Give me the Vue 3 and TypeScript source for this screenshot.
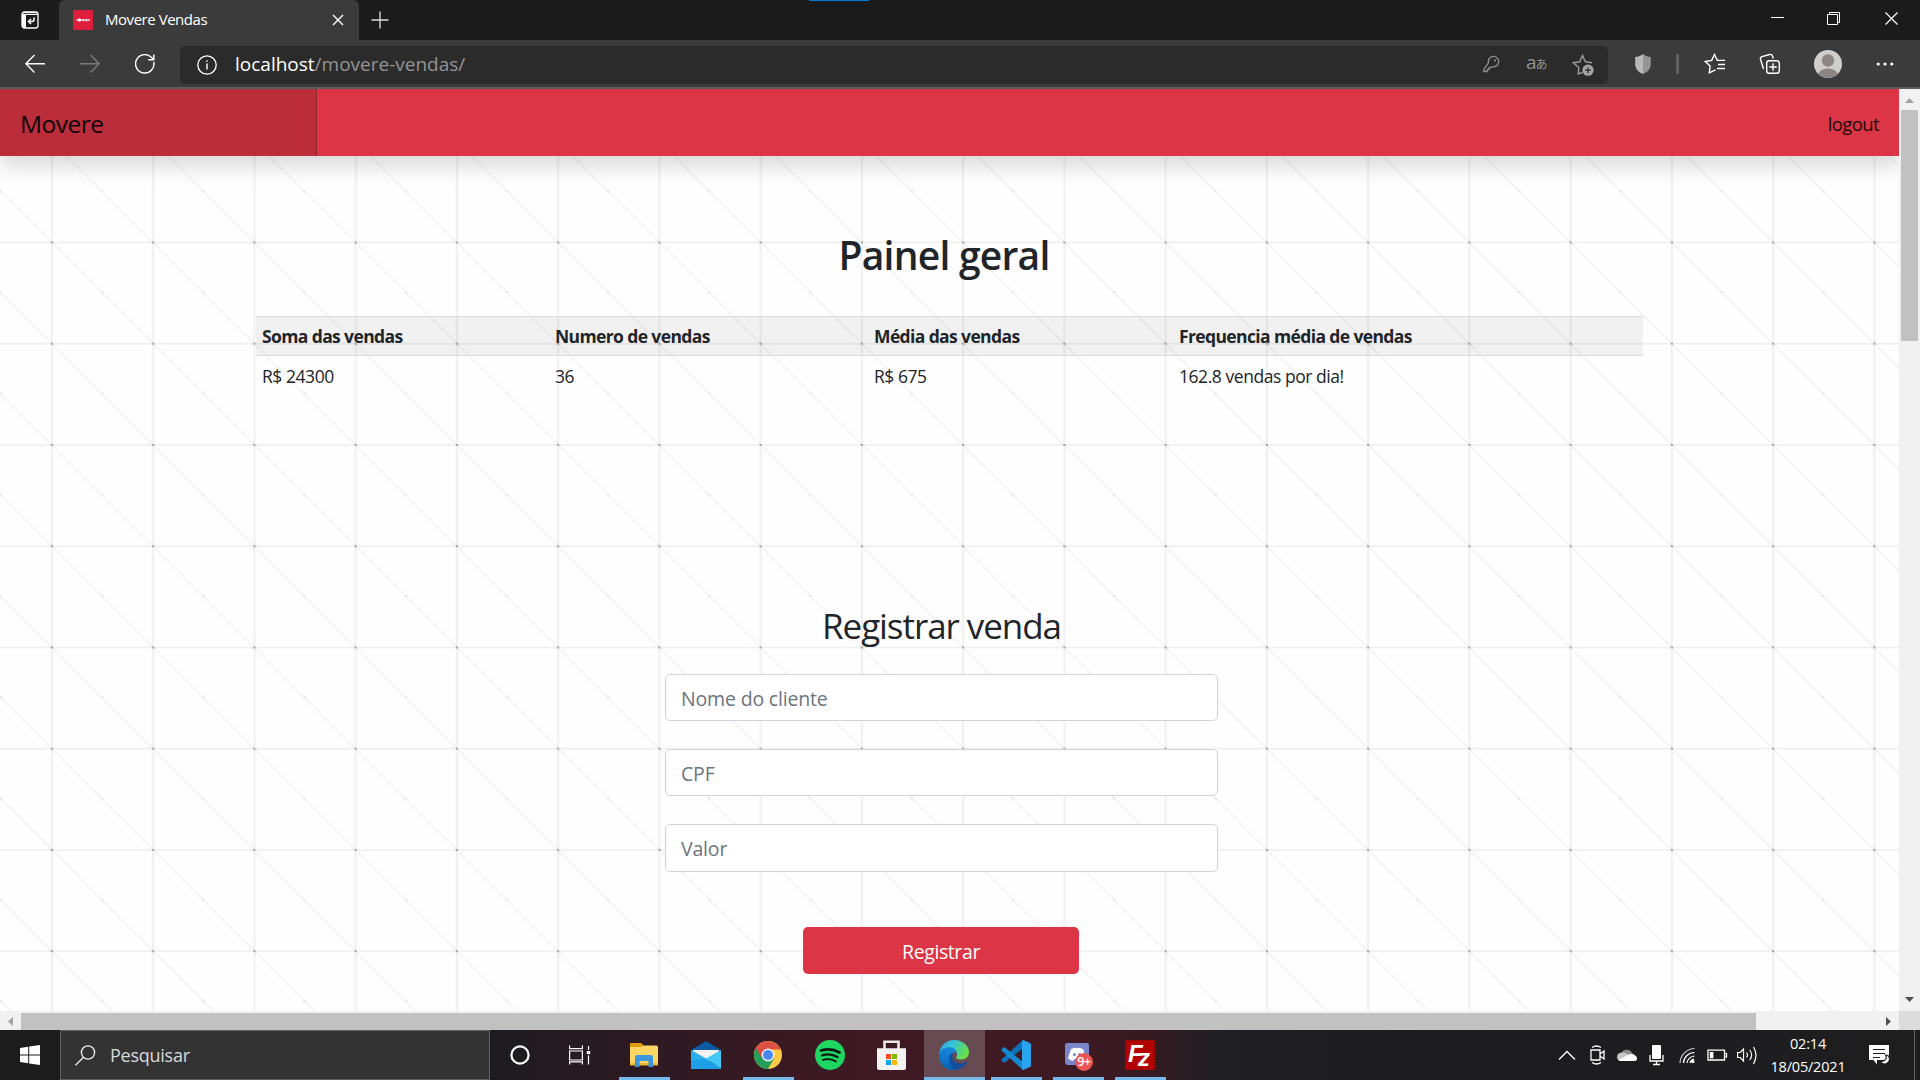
<script setup lang="ts">
interface Column {
  title: string
  value: string
  width: number
}

const columns: Column[] = [
  { title: 'Soma das vendas', value: 'R$ 24300', width: 293 },
  { title: 'Numero de vendas', value: '36', width: 319 },
  { title: 'Média das vendas', value: 'R$ 675', width: 305 },
  { title: 'Frequencia média de vendas', value: '162.8 vendas por dia!', width: 470 }
]

const fields: string[] = ['Nome do cliente', 'CPF', 'Valor']
</script>

<template>
  <div class="desktop">
    <header class="titlebar">
      <div class="tab-actions">
        <svg width="20" height="20" viewBox="0 0 20 20">
          <rect x="2" y="2" width="16" height="16" rx="2.5" fill="none" stroke="#fff" stroke-width="1.3" />
          <path d="M2 3h4v15H3.5L2 16zM2 2h16v3H2z" fill="#fff" />
          <path d="M3 3.5h14" stroke="#1b1b1b" stroke-width=".8" />
          <path d="M14 7.5v2a2 2 0 0 1-2 2H9M11 9l-2.6 2.5L11 14" fill="none" stroke="#fff" stroke-width="1.5" />
        </svg>
      </div>
      <div class="tab">
        <svg class="favicon" width="20" height="20" viewBox="0 0 20 20">
          <rect width="20" height="20" fill="#dc1f3c" />
          <path d="M3.500 10h13.500" stroke="#fff" stroke-opacity=".8" stroke-width="1.500" />
          <path d="M6.500 8.200v3.600" stroke="#fff" stroke-opacity=".85" stroke-width="1.500" />
          <path d="M5 10h3M10 10.500h1M13 10.500h1" stroke="#fff" stroke-width="1.800" />
        </svg>
        <span class="tab-title">Movere Vendas</span>
        <svg width="12" height="12" viewBox="0 0 12 12"><path d="M1 1l10 10M11 1L1 11" stroke="#fff" stroke-width="1.4" /></svg>
      </div>
      <svg class="new-tab" width="18" height="18" viewBox="0 0 18 18"><path d="M9 .5v17M.5 9h17" stroke="#ddd" stroke-width="1.3" /></svg>
      <div class="accent"></div>
      <div class="window-controls">
        <svg width="13" height="13" viewBox="0 0 13 13"><path d="M0 5.5h13" stroke="#fff" /></svg>
        <svg width="13" height="13" viewBox="0 0 13 13"><path d="M.5 2.5h10v10H.5zM2.5 2.5v-2h10v10h-2" fill="none" stroke="#fff" /></svg>
        <svg width="13" height="13" viewBox="0 0 13 13"><path d="M.5.5l12 12M12.5.5l-12 12" stroke="#fff" stroke-width="1.2" /></svg>
      </div>
    </header>

    <div class="toolbar">
      <div class="nav">
        <svg width="20" height="20" viewBox="0 0 20 20"><path d="M20 9.7H1M9.5 1L.9 9.7l8.6 8.7" fill="none" stroke="#fff" stroke-width="1.4" /></svg>
        <svg width="20" height="20" viewBox="0 0 20 20"><path d="M0 9.7h19M10.5 1l8.6 8.7-8.6 8.7" fill="none" stroke="#7b7b7b" stroke-width="1.4" /></svg>
        <svg width="20" height="20" viewBox="0 0 20 20"><path d="M18.8 8A9.2 9.2 0 1 1 15.7 2.8L18.5 5.2M18.8.5v5.2H13.2" fill="none" stroke="#fff" stroke-width="1.4" /></svg>
      </div>
      <div class="address">
        <svg class="info" width="20" height="20" viewBox="0 0 20 20">
          <circle cx="10" cy="10" r="9.2" fill="none" stroke="#fff" stroke-width="1.3" />
          <path d="M10 8.5v6M10 5.2v1.6" stroke="#fff" stroke-width="1.4" />
        </svg>
        <div class="url"><span class="host">localhost</span>/movere-vendas/</div>
        <div class="address-icons">
          <svg width="20" height="20" viewBox="0 0 20 20">
            <path d="M8 8.2A5.2 5.2 0 1 1 11.7 12l-1.2 1.1H8.7v2H6.8v1.8H3.3V15z" transform="translate(-.6 -.4)" fill="none" stroke="#8f8f8f" stroke-width="1.3" />
            <circle cx="14" cy="5.600" r="1.1" fill="#8f8f8f" />
          </svg>
          <span class="translate"><i>a</i><b>あ</b></span>
          <svg width="22" height="22" viewBox="0 0 22 22">
            <path d="M10.5 18.5L6.2 20l.6-6.5L1.3 8.8l6.4-1L10.5 1.5l2.9 6.3 6.6 1" fill="none" stroke="#9c9c9c" stroke-width="1.4" />
            <circle cx="16" cy="16.2" r="5.6" fill="#a6a6a6" />
            <path d="M16 13.2v6M13 16.2h6" stroke="#2b2b2b" stroke-width="1.3" />
          </svg>
        </div>
      </div>
      <svg class="shield" width="16" height="20" viewBox="0 0 16 20">
        <path d="M8 0C5.500 2 3 2.800.2 3v7c0 5 3.500 8.500 7.800 10z" fill="#b9b9b9" />
        <path d="M8 0c2.500 2 5 2.800 7.800 3v7c0 5-3.500 8.500-7.800 10z" fill="#949494" />
      </svg>
      <div class="divider"></div>
      <svg class="favorites" width="22" height="22" viewBox="0 0 22 22">
        <path d="M11.500 16.800L5.300 19.800l.8-6.700L1.200 8.500l6.500-1.100L10.500 1.500l2.800 5.900H21M14 11.500h7M13 15.500h8" fill="none" stroke="#fff" stroke-width="1.4" />
      </svg>
      <svg class="collections" width="22" height="22" viewBox="0 0 22 22">
        <rect x="7.700" y="7.700" width="12.600" height="12.600" rx="2.500" fill="none" stroke="#fff" stroke-width="1.4" />
        <path d="M14 10.200v7.600M10.200 14h7.600M4.500 16L1.500 6.200Q1 4.300 3 3.700L10.500 1.500Q12.800 1 13.500 3l.8 2.500" fill="none" stroke="#fff" stroke-width="1.4" />
      </svg>
      <svg class="avatar" width="28" height="28" viewBox="0 0 28 28">
        <defs><clipPath id="face"><circle cx="14" cy="14" r="14" /></clipPath></defs>
        <g clip-path="url(#face)">
          <rect width="28" height="28" fill="#d0cecb" />
          <circle cx="14" cy="10.500" r="6.200" fill="#8b8684" />
          <ellipse cx="14" cy="26" rx="10.500" ry="7.500" fill="#8b8684" />
        </g>
      </svg>
      <svg class="more" width="18" height="4" viewBox="0 0 18 4"><g fill="#fff"><circle cx="2.200" cy="2" r="1.600" /><circle cx="9" cy="2" r="1.600" /><circle cx="15.800" cy="2" r="1.600" /></g></svg>
    </div>

    <div class="viewport">
      <div class="page">
        <svg class="backdrop" width="1899" height="922">
          <defs>
            <pattern id="grid" x="51.9" y="52.2" width="101.250" height="101.250" patternUnits="userSpaceOnUse">
              <path d="M0 0L101.250 101.250" stroke="#000" stroke-opacity=".05" stroke-width="1.400" />
              <path d="M0 0H101.250M0 101.250H101.250M0 0V101.250M101.250 0V101.250" stroke="#000" stroke-opacity=".052" stroke-width="2.200" />
              <circle cx="50" cy="50" r="1.300" fill="#000" fill-opacity=".05" />
              <path d="M0 0h1v1H0zM0 100.250h1v1H0zM100.250 0h1v1h-1zM100.250 100.250h1v1h-1z" fill="#000" fill-opacity=".3" />
            </pattern>
          </defs>
          <rect width="1899" height="922" fill="url(#grid)" />
        </svg>
        <nav class="navbar">
          <a class="brand">Movere</a>
          <a class="logout">logout</a>
        </nav>
        <main class="content">
          <h1>Painel geral</h1>
          <table>
            <colgroup><col v-for="c in columns" :key="c.title" :style="{ width: c.width + 'px' }" /></colgroup>
            <thead><tr><th v-for="c in columns" :key="c.title">{{ c.title }}</th></tr></thead>
            <tbody><tr><td v-for="c in columns" :key="c.title">{{ c.value }}</td></tr></tbody>
          </table>
          <h2>Registrar venda</h2>
          <form @submit.prevent>
            <input v-for="f in fields" :key="f" type="text" :placeholder="f" />
            <button type="submit">Registrar</button>
          </form>
        </main>
      </div>
      <div class="vscroll">
        <svg width="9" height="5" viewBox="0 0 9 5"><path d="M0 5L4.500 0 9 5z" fill="#a3a3a3" /></svg>
        <div class="vthumb"></div>
        <svg width="9" height="5" viewBox="0 0 9 5"><path d="M0 0h9L4.500 5z" fill="#505050" /></svg>
      </div>
      <div class="hscroll">
        <svg width="5" height="9" viewBox="0 0 5 9"><path d="M5 0v9L0 4.500z" fill="#a3a3a3" /></svg>
        <div class="hthumb"></div>
        <svg width="5" height="9" viewBox="0 0 5 9"><path d="M0 0v9l5-4.500z" fill="#505050" /></svg>
      </div>
      <div class="corner"></div>
    </div>

    <footer class="taskbar">
      <div class="start">
        <svg width="20" height="20" viewBox="0 0 20 20"><path d="M0 3l8.200-1.200v7.700H0zM9.200 1.600L20 0v9.500H9.200zM0 10.500h8.200v7.700L0 17zM9.200 10.500H20V20L9.200 18.400z" fill="#fff" /></svg>
      </div>
      <div class="search">
        <svg width="21" height="21" viewBox="0 0 21 21"><circle cx="13" cy="7.500" r="6.600" fill="none" stroke="#e8e8e8" stroke-width="1.400" /><path d="M8.500 12.300L.5 20.300" stroke="#e8e8e8" stroke-width="1.500" /></svg>
        <span>Pesquisar</span>
      </div>
      <div class="system-slot"><svg width="20" height="20" viewBox="0 0 20 20"><circle cx="10" cy="10" r="8.600" fill="none" stroke="#fff" stroke-width="2.200" /></svg></div>
      <div class="system-slot">
        <svg width="22" height="20" viewBox="0 0 22 20"><path d="M.6.500v3.200h12.800V.5M.6 6h12.800v9H.6zM.6 19.500v-2.700h12.800v2.700M19.500 1v4M19.500 10.500v9" fill="none" stroke="#fff" stroke-width="1.200" /><path d="M17.800 6h3.400v3.200h-3.400z" fill="#fff" /></svg>
      </div>
      <div class="apps">
        <div class="app open">
          <svg width="28" height="24" viewBox="0 0 28 24">
            <path d="M0 1.500Q0 0 1.500 0H11l2 2.500h13.500Q28 2.500 28 4v18H0z" fill="#ffd563" />
            <path d="M0 1.500Q0 0 1.500 0H11l2 2-2 2H0z" fill="#e09b00" />
            <path d="M0 20h28v2.500H0z" fill="#edb62e" />
            <path d="M5 24V14q0-2 2-2h14q2 0 2 2v10h-4.500v-6h-9v6z" fill="#3b96dc" />
          </svg>
        </div>
        <div class="app">
          <svg width="30" height="28" viewBox="0 0 30 28">
            <path d="M0 9L15 0l15 9v3H0z" fill="#0c59a4" />
            <path d="M2 9h26v8l-13 4-13-4z" fill="#f1f1f1" />
            <path d="M0 9l15 8.500V28H0z" fill="#29aeee" />
            <path d="M30 9v19L15 17.500z" fill="#42c8f5" /><path d="M0 28V20l15-2.500L30 28z" fill="#1d9fe8" />
          </svg>
        </div>
        <div class="app open">
          <svg width="28" height="28" viewBox="0 0 28 28">
            <circle cx="14" cy="14" r="14" fill="#fccb45" />
            <path d="M14 14L1.900 7A14 14 0 0 0 14 28l6-10.500z" fill="#259e5c" />
            <path d="M1.900 7A14 14 0 0 1 26.100 7L27 8.500H14L8 17.500z" fill="#dc5044" />
            <circle cx="14" cy="14" r="6.400" fill="#f4f4f4" /><circle cx="14" cy="14" r="5" fill="#4888f4" />
          </svg>
        </div>
        <div class="app">
          <svg width="30" height="30" viewBox="0 0 30 30">
            <circle cx="15" cy="15" r="15" fill="#1fd661" />
            <g fill="none" stroke="#0c1911" stroke-linecap="round"><path d="M6 10.500q10-3 18.500 2" stroke-width="2.700" /><path d="M7 15.300q8.500-2.500 15.500 1.800" stroke-width="2.300" /><path d="M7.800 19.800q7-2 13 1.600" stroke-width="1.900" /></g>
          </svg>
        </div>
        <div class="app">
          <svg width="29" height="30" viewBox="0 0 29 30">
            <path d="M7.500 10V1.800h14V10" fill="none" stroke="#e9e9e9" stroke-width="2.600" />
            <path d="M0 8.300h29V28q0 2-2 2H2q-2 0-2-2z" fill="#f3f3f3" />
            <path d="M9 14h5v5H9z" fill="#f25022" /><path d="M15 14h5v5h-5z" fill="#7fba00" /><path d="M9 20h5v5H9z" fill="#00a4ef" /><path d="M15 20h5v5h-5z" fill="#ffb900" />
          </svg>
        </div>
        <div class="app open active">
          <svg width="30" height="30" viewBox="0 0 30 30">
            <defs>
              <linearGradient id="edge-top" x1="0" y1="0" x2="1" y2=".4"><stop offset="0" stop-color="#2fa5e8" /><stop offset=".5" stop-color="#36c5d3" /><stop offset="1" stop-color="#66e04a" /></linearGradient>
              <linearGradient id="edge-side" x1="0" y1="0" x2="0" y2="1"><stop offset="0" stop-color="#1688dc" /><stop offset="1" stop-color="#0a62b8" /></linearGradient>
            </defs>
            <path d="M0 14.500C1 6 7 0 15 0c9 0 15 6 15 12 0 5-3.500 7.500-8 7.500-4.500 0-5.500-1.500-4.500-3 1.500-2 .8-5-2.500-7C10 6.500 2 9 0 14.500z" fill="url(#edge-top)" />
            <path d="M0 14.500C1 9 6 7 10.500 7.200c5 .2 8 3.500 7.500 7.300-.5-2.500-4-3.500-5.500-.5-2 5 1 11 8 13-2 2-4 3-7 3C5 29.500-.5 22 0 14.500z" fill="url(#edge-side)" />
            <path d="M10.500 16c-1.500 5 1 11 6 13.700 5-.2 9-3 11.500-7 .3-.8-.5-1-1-.6-5.500 2.700-11 1-13-2.600-1.500-3 .3-5.500 1-6-2 .2-3.700.5-4.500 2.500z" fill="#114f9c" />
          </svg>
        </div>
        <div class="app open">
          <svg width="30" height="30" viewBox="0 0 30 30">
            <path d="M22 0v8L4 22.500Q3.200 23 2.500 22.400L.6 20.700Q0 20 .7 19.300z" fill="#0f72b8" />
            <path d="M22 30v-8L4 7.500Q3.200 7 2.500 7.600L.6 9.300Q0 10 .7 10.700z" fill="#1688d0" />
            <path d="M22 0l7 3q1 .5 1 1.500v21q0 1-1 1.500l-7 3q-1-.5-1-1.500V1.500Q21 .5 22 0z" fill="#2aa4ee" />
          </svg>
        </div>
        <div class="app open">
          <svg width="30" height="32" viewBox="0 0 30 32">
            <path d="M2 6q0-2 2-2h20q2 0 2 2v22L23 26H5q-3 0-3-3z" fill="#7986cb" />
            <path d="M8 10q6-2.500 12 0l3 9q-2 3-5 3l-1.500-2h-5L10 22q-3 0-5-3z" fill="#fff" />
            <circle cx="11.500" cy="15.500" r="1.600" fill="#7986cb" /><circle cx="16.800" cy="15.500" r="1.600" fill="#7986cb" />
            <circle cx="21" cy="23" r="9" fill="#ed5454" />
            <text x="21" y="27.300" text-anchor="middle" font-family="Open Sans, sans-serif" font-weight="600" font-size="12.500" letter-spacing="-.3" fill="#fff">9+</text>
          </svg>
        </div>
        <div class="app open">
          <svg width="30" height="30" viewBox="0 0 30 30">
            <rect x=".700" y=".700" width="28.600" height="28.600" fill="#b30000" stroke="#b30000" stroke-width="1.400" stroke-dasharray="2 1" />
            <text x="3" y="21.500" font-family="Liberation Sans, sans-serif" font-weight="bold" font-style="italic" font-size="24" fill="#fff">F</text>
            <text x="13" y="26" font-family="Liberation Sans, sans-serif" font-weight="bold" font-style="italic" font-size="24" fill="#fff">z</text>
          </svg>
        </div>
      </div>
      <div class="tray">
        <svg viewBox="0 0 24 24"><path d="M4 16.500L12 8.500l8 8" fill="none" stroke="#fff" stroke-width="1.300" /></svg>
        <svg viewBox="0 0 24 24"><path d="M6 7h9v10H6zM15 11l4-3v8l-4-3M7 4.500q4.500-3 9 0M7 19.500q4.500 3 9 0" fill="none" stroke="#fff" stroke-width="1.300" /></svg>
        <svg viewBox="0 0 24 24"><path d="M6 11a6 6 0 0 1 11-1l3 3-10 3z" fill="#8f8f8f" /><path d="M5 18a4.200 4.200 0 0 1 1-8.200q4-1 7 2.200l-6 6z" fill="#c6c6c6" /><path d="M3.500 17l10-5.500q6-2 8.500 3.500.5 3-3 3H5z" fill="#fff" /></svg>
        <svg viewBox="0 0 24 24"><rect x="7" y="2" width="9" height="14" rx="1" fill="#fff" /><path d="M5 12v6h13v-6M11.500 18v3.500M8 21.500h7" fill="none" stroke="#fff" stroke-width="1.300" /></svg>
        <svg viewBox="0 0 24 24"><g fill="none" stroke="#fff" stroke-width="1.200"><path d="M5 20A15 15 0 0 1 19.500 5.500" stroke-opacity=".75" /><path d="M8.500 20A11 11 0 0 1 19.500 9.500M12 20a8 8 0 0 1 7.500-7M15 20a5 5 0 0 1 4-4" /></g><circle cx="17.800" cy="18.500" r="1.700" fill="#fff" /></svg>
        <svg viewBox="0 0 24 24"><path d="M3 7.200h16.500v9.800H3zM20.500 10.500h1v3.500h-1" fill="none" stroke="#fff" stroke-width="1.300" /><path d="M4.800 9h3.600v6.300H4.800z" fill="#fff" /></svg>
        <svg viewBox="0 0 24 24"><path d="M2.600 9.500h2.600L8.500 6v12l-3.300-3.500H2.600zM11.500 9.500q2 2.500 0 5M14.800 7q3.600 5 0 10M18.500 4q5 8 0 17" fill="none" stroke="#fff" stroke-width="1.200" /></svg>
      </div>
      <div class="clock"><span>02:14</span><span>18/05/2021</span></div>
      <svg class="notice" width="22" height="20" viewBox="0 0 22 20">
        <path d="M0 0h20v15H8v4.500L4.500 15H0z" fill="#fff" /><path d="M4 4.500h12M4 8.500h12M4 12.500h7" stroke="#1e1e20" stroke-width="1.200" />
        <path d="M16.500 10q3 5-5 7 3.500 3.500 7 1t1-7q-1-1-3-1z" fill="#fff" stroke="#1e1e20" stroke-width="1.200" />
      </svg>
      <div class="peek"></div>
    </footer>
  </div>
</template>

<style>
body {
  background: #1b1b1b;
  overflow: hidden;
}
</style>

<style scoped>
.desktop {
  width: 1920px;
  height: 1080px;
  display: flex;
  flex-direction: column;
  font-family: "Open Sans", "Noto Sans", sans-serif;
  overflow: hidden;
}
svg { display: block; flex: none; }
.titlebar {
  height: 40px;
  display: flex;
  background: #1b1b1b;
}
.tab-actions {
  width: 59px;
  display: flex;
  align-items: center;
  padding-left: 20px;
  box-sizing: border-box;
}
.tab {
  width: 300px;
  height: 40px;
  box-sizing: border-box;
  padding: 0 15px 0 14px;
  display: flex;
  align-items: center;
  background: #3b3b3b;
  border-radius: 6px 6px 0 0;
}
.tab-title {
  flex: 1;
  margin-left: 12px;
  color: #fff;
  font-size: 15px;
  letter-spacing: -0.46px;
  line-height: 38px;
  padding-bottom: 2px;
}
.new-tab { margin: 11px 0 0 12px; }
.accent {
  width: 60px;
  height: 1px;
  margin-left: 420px;
  background: #0078d7;
}
.window-controls {
  display: flex;
  gap: 45px;
  margin: 12px 22px 0 auto;
}
.window-controls svg:first-child { margin-right: -2px; }
.toolbar {
  height: 49px;
  box-sizing: border-box;
  border-bottom: 2px solid #5d5d5d;
  background: #3b3b3b;
  display: flex;
  align-items: center;
}
.nav {
  display: flex;
  gap: 35px;
  padding-left: 25px;
}
.address {
  width: 1428px;
  height: 38px;
  margin: 2px 0 0 25px;
  display: flex;
  align-items: center;
  background: #2b2b2b;
  border-radius: 5px;
}
.info { margin-left: 17px; }
.url {
  flex: 1;
  margin-left: 18px;
  padding-bottom: 2px;
  font-size: 19px;
  color: #949494;
}
.host { color: #fff; }
.address-icons {
  display: flex;
  align-items: center;
  margin-right: 14px;
}
.translate {
  display: flex;
  align-items: baseline;
  margin: -3px 24px 0 25px;
  color: #949494;
  line-height: 22px;
  width: 22px;
}
.translate i { font: normal 19px/22px "Open Sans", sans-serif; }
.translate b { font: normal 12px/22px "Noto Sans CJK JP", sans-serif; margin-left: -1px; }
.shield { margin-left: 27px; }
.divider { width: 3px; height: 20px; margin: 0 25px 0 25px; background: #606060; }
.collections { margin-left: 33px; }
.avatar { margin-left: 33px; }
.more { margin-left: 34px; }
.viewport {
  height: 941px;
  display: grid;
  grid-template: 922px 19px / 1899px 21px;
  background: #f1f1f1;
}
.page {
  position: relative;
  background: #fefefe;
  overflow: hidden;
}
.backdrop { position: absolute; top: 0; left: 0; }
.navbar {
  position: relative;
  height: 67px;
  display: flex;
  justify-content: space-between;
  align-items: center;
  background: #dc3545;
  box-shadow: 0 10px 20px rgba(0, 0, 0, .15);
}
.brand {
  width: 317px;
  height: 67px;
  box-sizing: border-box;
  padding: 1px 0 0 20px;
  line-height: 67px;
  font-size: 24.5px;
  letter-spacing: -0.5px;
  color: #0d0304;
  background: #bb2d3b;
  box-shadow: inset -1px 0 0 #8f222d;
}
.logout {
  margin-right: 20px;
  padding-top: 1px;
  font-size: 18.5px;
  letter-spacing: -0.6px;
  color: #210809;
}
.content {
  position: relative;
  padding-top: 75px;
  color: #212529;
}
h1 {
  margin: 0 0 37px;
  width: 1888px;
  text-align: center;
  font-size: 39px;
  line-height: 48px;
  font-weight: 600;
  letter-spacing: -0.76px;
}
table {
  width: 1387px;
  margin-left: 256px;
  table-layout: fixed;
  border-collapse: collapse;
  font-size: 17.5px;
  text-align: left;
}
th, td { padding: 1px 6px 0; line-height: 37px; }
thead tr { background: rgba(0, 0, 0, .05); }
th {
  letter-spacing: -0.62px;
  border-top: 1px solid #d9dde1;
  border-bottom: 1px solid #d9dde1;
}
td { letter-spacing: -0.45px; line-height: 38px; }
h2 {
  margin: 210px 0 27px;
  width: 1883px;
  text-align: center;
  font-size: 35px;
  line-height: 42px;
  font-weight: 400;
  letter-spacing: -1.06px;
}
form {
  width: 553px;
  margin-left: 665px;
  display: flex;
  flex-direction: column;
  align-items: center;
  gap: 28px;
}
input {
  width: 553px;
  height: 47px;
  box-sizing: border-box;
  padding: 1px 15px 0;
  border: 1px solid #ced4da;
  border-radius: 5px;
  background: #fff;
  font: 19.5px "Open Sans", sans-serif;
  letter-spacing: -0.17px;
}
input:last-of-type { height: 48px; }
input::placeholder { color: #6c757d; opacity: 1; }
button {
  width: 276px;
  height: 47px;
  margin: 27px 1px 0 0;
  padding: 1px 0 0;
  border: 0;
  border-radius: 5px;
  background: #dc3545;
  color: #fff;
  font: 19.5px "Open Sans", sans-serif;
  letter-spacing: -0.4px;
}
.vscroll {
  display: flex;
  flex-direction: column;
  align-items: center;
  padding: 9px 0;
}
.vthumb {
  width: 17px;
  height: 231px;
  margin: 7px 0 auto;
  background: #c1c1c1;
}
.hscroll {
  display: flex;
  align-items: center;
  padding: 2px 8px 0;
}
.hthumb {
  width: 1735px;
  height: 17px;
  margin: 0 auto 0 8px;
  background: #c1c1c1;
}
.corner { background: #dcdcdc; }
.taskbar {
  height: 50px;
  display: flex;
  background: linear-gradient(90deg, #1c1c1d 0, #1c1c20 490px, #2b1a22 620px, #3f1923 860px, #401a22 1060px, #341a22 1150px, #202024 1220px, #1c1c1f 1400px, #1e1e1f 1920px);
}
.start { width: 60px; display: flex; align-items: center; justify-content: center; }
.search {
  width: 430px;
  box-sizing: border-box;
  border: 1px solid #606060;
  background: #333;
  display: flex;
  align-items: center;
  padding-left: 14px;
  gap: 14px;
  color: #dadada;
  font-size: 18px;
  letter-spacing: -0.25px;
}
.system-slot { width: 60px; display: flex; align-items: center; justify-content: center; }
.apps { display: flex; margin-left: 4px; }
.app {
  width: 62px;
  height: 50px;
  box-sizing: border-box;
  padding-right: 3px;
  display: flex;
  align-items: center;
  justify-content: center;
}
.app.open { background: linear-gradient(#76b9ed, #76b9ed) 5px 47px / 51px 3px no-repeat; }
.app.active { background: linear-gradient(#76b9ed, #76b9ed) 0 47px / 61px 3px no-repeat, linear-gradient(#684a52, #684a52) 0 0 / 61px 50px no-repeat; }
.tray { display: flex; align-items: center; gap: 6px; margin-left: 383px; }
.tray svg { width: 24px; height: 24px; }
.clock {
  width: 98px;
  display: flex;
  flex-direction: column;
  align-items: center;
  padding-top: 2px;
  color: #fff;
  font-size: 14.5px;
  line-height: 23px;
  letter-spacing: -0.2px;
}
.notice { margin: 15px 0 0 12px; }
.peek { width: 1px; margin-left: 23px; background: #666; }
</style>
